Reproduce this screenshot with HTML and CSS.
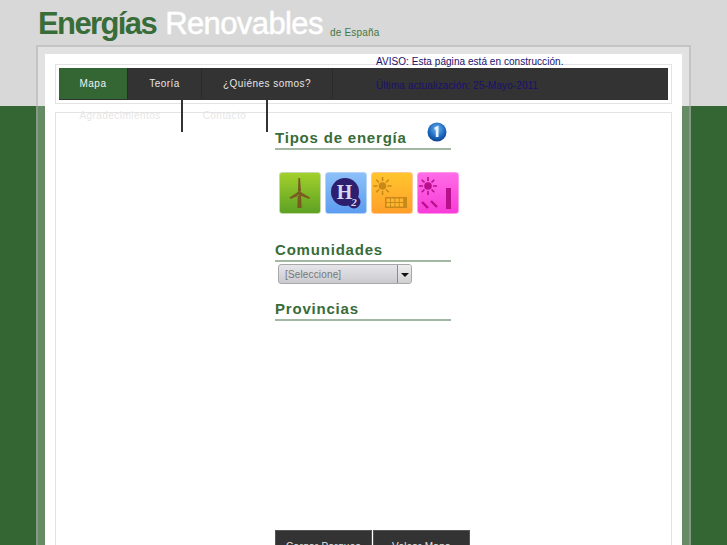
FILE: index.html
```html
<!DOCTYPE html>
<html lang="es">
<head>
    <meta charset="UTF-8">
    <meta name="viewport" content="width=device-width, initial-scale=1.0">
    <title>Energías Renovables de España</title>
    <link rel="stylesheet" href="styles.css">
</head>
<body>
    <header class="top">
        <h1 class="logo"><span class="logo-green">Energías</span><span class="logo-white">Renovables</span></h1>
        <span class="logo-sub">de España</span>
    </header>

    <div class="frame">
        <div class="panel">
            <div class="notice">
                <p class="notice-main">AVISO: Esta página está en construcción.</p>
                <p class="notice-date">Última actualización: 25-Mayo-2011</p>
            </div>

            <div class="nav-box">
                <ul class="nav">
                    <li class="active"><a>Mapa</a></li>
                    <li class="w-teoria"><a>Teoría</a></li>
                    <li class="w-quienes"><a>¿Quiénes somos?</a></li>
                    <li class="w-agrad"><a>Agradecimientos</a></li>
                    <li class="w-contacto"><a>Contacto</a></li>
                </ul>
            </div>

            <div class="content">
                <div class="column">
                    <div class="section-head">
                        <h2>Tipos de energía</h2>
                        <svg class="info" width="20" height="21" viewBox="0 0 20 21">
                            <defs>
                                <radialGradient id="infoBall" cx="0.5" cy="0.35" r="0.7">
                                    <stop offset="0" stop-color="#6fb6ee"/>
                                    <stop offset="0.6" stop-color="#1c68c0"/>
                                    <stop offset="1" stop-color="#0c3a80"/>
                                </radialGradient>
                            </defs>
                            <circle cx="10" cy="10" r="9.5" fill="url(#infoBall)"/>
                            <path d="M7.5 5.5 L11.5 3.5 L11.5 15 L8.8 15 L8.8 7.5 L7.5 8 Z" fill="#e8f3fc"/>
                        </svg>
                    </div>

                    <div class="icons">
                        <div class="tile tile-wind">
                            <svg width="40" height="40" viewBox="0 0 40 40">
                                <path d="M18.4 5 L20 5 L21 18 L18 18 Z M18 19 L9.5 24.5 L10.5 26 L20 22 Z M20.5 19 L30 24.5 L29.2 26 L19 22 Z M17.8 21 L21 21 L21.6 35 L17.4 35 Z" fill="#7a5a20"/>
                                <circle cx="19.3" cy="20" r="2" fill="#7a5a20"/>
                            </svg>
                        </div>
                        <div class="tile tile-h2">
                            <svg width="40" height="40" viewBox="0 0 40 40">
                                <circle cx="19" cy="19" r="14" fill="#2e1f6e"/>
                                <circle cx="28" cy="29" r="6.5" fill="#2e1f6e"/>
                                <text class="h-big" x="18.5" y="26" text-anchor="middle">H</text>
                                <text class="h-small" x="28" y="33" text-anchor="middle">2</text>
                            </svg>
                        </div>
                        <div class="tile tile-solar">
                            <svg width="40" height="40" viewBox="0 0 40 40">
                                <path d="M10.5 4 V8 M10.5 18 V22 M1.5 13 H5.5 M15.5 13 H19.5 M4.2 6.7 L7 9.5 M14 16.5 L16.8 19.3 M4.2 19.3 L7 16.5 M14 9.5 L16.8 6.7" stroke="#c8881a" stroke-width="1.6"/>
                                <circle cx="10.5" cy="13" r="3.8" fill="#c8881a"/>
                                <path d="M13 24 H35 V35 H13 Z" fill="#c8881a"/>
                                <path d="M14.5 25.5 H18 V29 H14.5 Z M18.9 25.5 H22.4 V29 H18.9 Z M23.3 25.5 H26.8 V29 H23.3 Z M27.7 25.5 H31.2 V29 H27.7 Z M14.5 30 H18 V33.5 H14.5 Z M18.9 30 H22.4 V33.5 H18.9 Z M23.3 30 H26.8 V33.5 H23.3 Z M27.7 30 H31.2 V33.5 H27.7 Z" fill="#fdb52e"/>
                            </svg>
                        </div>
                        <div class="tile tile-thermal">
                            <svg width="40" height="40" viewBox="0 0 40 40">
                                <path d="M10 4 V8 M10 18 V22 M1 13 H5 M15 13 H19 M3.7 6.7 L6.5 9.5 M13.5 16.5 L16.3 19.3 M3.7 19.3 L6.5 16.5 M13.5 9.5 L16.3 6.7" stroke="#b8108c" stroke-width="1.6"/>
                                <circle cx="10" cy="13" r="3.8" fill="#b8108c"/>
                                <path d="M28 15 H33 V36 H28 Z" fill="#b8108c"/>
                                <path d="M4 29 L10 35 M13 28 L19 34" stroke="#b8108c" stroke-width="2.4"/>
                            </svg>
                        </div>
                    </div>

                    <h2 class="heading heading-com">Comunidades</h2>
                    <div class="select">
                        <span class="select-label">[Seleccione]</span>
                        <span class="select-arrow"></span>
                    </div>

                    <h2 class="heading heading-prov">Provincias</h2>

                    <div class="buttons">
                        <button class="btn">Cargar Parques</button>
                        <button class="btn">Volcar Mapa</button>
                    </div>
                </div>
            </div>
        </div>
    </div>
</body>
</html>
```

FILE: styles.css
```css
* {
    box-sizing: border-box;
}

html, body {
    height: 545px;
    overflow: hidden;
}

body {
    margin: 0;
    font-family: "Liberation Sans", Arial, sans-serif;
    background: linear-gradient(#d8d8d8 0, #d8d8d8 106px, #336633 106px);
}

/* header */
.top {
    display: flex;
    align-items: flex-end;
    height: 45px;
    padding: 0 0 3px 38px;
}

.logo {
    margin: 0;
    font-size: 31px;
    line-height: 36px;
    font-weight: bold;
    white-space: nowrap;
}

.logo-green {
    color: #386c38;
    letter-spacing: -1.6px;
}

.logo-white {
    margin-left: 9px;
    color: #fff;
    font-weight: normal;
    letter-spacing: -0.6px;
    -webkit-text-stroke: 0.5px #fff;
}

.logo-sub {
    margin: 0 0 4px 7px;
    font-size: 10px;
    letter-spacing: 0.2px;
    color: #447744;
}

/* frame and panel */
.frame {
    width: 655px;
    height: 500px;
    margin-left: 36px;
    padding: 7px 7px 0;
    border: 2px solid rgba(165, 165, 165, 0.5);
    border-bottom: 0;
    background: rgba(255, 255, 255, 0.25);
}

.panel {
    position: relative;
    height: 100%;
    padding: 10px 10px 0;
    background: #fff;
}

.notice {
    position: absolute;
    left: 331px;
    top: 1px;
    font-size: 10px;
    color: #1a1070;
    z-index: 2;
}

.notice p {
    margin: 0;
    line-height: 14px;
}

.notice-main {
    letter-spacing: 0.05px;
}

.notice p.notice-date {
    margin-top: 10px;
    letter-spacing: 0.12px;
}

/* nav */
.nav-box {
    height: 40px;
    padding: 3px;
    border: 1px solid #e3e3e3;
}

.nav {
    display: flex;
    flex-wrap: wrap;
    align-content: flex-start;
    height: 32px;
    margin: 0;
    padding: 0;
    list-style: none;
    background: #333;
}

.nav li {
    height: 31px;
    border-right: 1px solid #2a2a2a;
    font-size: 10px;
    letter-spacing: 0.45px;
    line-height: 31px;
    text-align: center;
    color: #e6e6e6;
}

.nav li.active {
    width: 69px;
    background: #336633;
    color: #f2f2f2;
}

.nav li.w-teoria {
    width: 74px;
}

.nav li.w-quienes {
    width: 131px;
    margin-right: 335px;
}

.nav li.w-agrad {
    width: 124px;
    height: 32px;
    margin-top: 1px;
    border-right: 2px solid #333;
}

.nav li.w-contacto {
    width: 85px;
    height: 32px;
    margin-top: 1px;
    border-right: 2px solid #333;
}

/* content */
.content {
    height: 440px;
    margin-top: 8px;
    padding-left: 219px;
    border: 1px solid #e3e3e3;
    border-bottom: 0;
}

.column {
    position: relative;
    width: 176px;
    height: 100%;
}

h2 {
    margin: 0;
    font-size: 15px;
    line-height: 20px;
    letter-spacing: 0.8px;
    color: #386c38;
}

.section-head {
    position: relative;
    height: 37px;
    padding-top: 15px;
    border-bottom: 2px solid #a3b8a3;
}

.info {
    position: absolute;
    left: 152px;
    top: 9px;
}

.icons {
    display: flex;
    gap: 4px;
    margin: 22px 0 0 4px;
}

.tile {
    width: 42px;
    height: 42px;
    border-radius: 3px;
}

.tile svg {
    display: block;
}

.tile-wind {
    background: linear-gradient(#a2d02c, #5da123);
    border: 1px solid #c6d9a8;
}

.tile-h2 {
    background: linear-gradient(#8cc0f8, #5c9cf0);
    border: 1px solid #b4d4fa;
}

.tile-solar {
    background: linear-gradient(#ffc52c, #ff9f2a);
    border: 1px solid #ffc890;
}

.tile-thermal {
    background: linear-gradient(#ff6ce6, #f83cd8);
    border: 1px solid #ff98ec;
}

.h-big {
    font-family: "Liberation Serif", serif;
    font-weight: bold;
    font-size: 20px;
    fill: #d8d8ee;
}

.h-small {
    font-family: "Liberation Serif", serif;
    font-style: italic;
    font-weight: bold;
    font-size: 11px;
    fill: #d8d8ee;
}

.heading {
    border-bottom: 2px solid #a3b8a3;
    height: 22px;
}

.heading-com {
    margin-top: 26px;
}

.heading-prov {
    margin-top: 15px;
}

/* select */
.select {
    display: flex;
    width: 134px;
    height: 20px;
    margin: 2px 0 0 3px;
    border: 1px solid #a8a8a8;
    border-radius: 3px;
    background: linear-gradient(#e6e6ea, #c9c9cf);
    overflow: hidden;
}

.select-label {
    flex: 1;
    padding-left: 6px;
    font-size: 10px;
    letter-spacing: 0.15px;
    line-height: 19px;
    color: #777;
}

.select-arrow {
    position: relative;
    width: 14px;
    border-left: 1px solid #8c8c8c;
    background: linear-gradient(#eee, #d0d0d0);
}

.select-arrow::after {
    content: "";
    position: absolute;
    left: 3px;
    top: 8px;
    border: 4px solid transparent;
    border-top-color: #111;
    border-bottom: 0;
}

/* bottom buttons */
.buttons {
    display: flex;
    gap: 1px;
    margin-top: 209px;
}

.btn {
    flex: none;
    width: 97px;
    height: 32px;
    padding: 0;
    border: 1px solid #555;
    background: #333;
    font-family: "Liberation Sans", Arial, sans-serif;
    font-size: 10px;
    letter-spacing: 0.3px;
    color: #e6e6e6;
}
```
